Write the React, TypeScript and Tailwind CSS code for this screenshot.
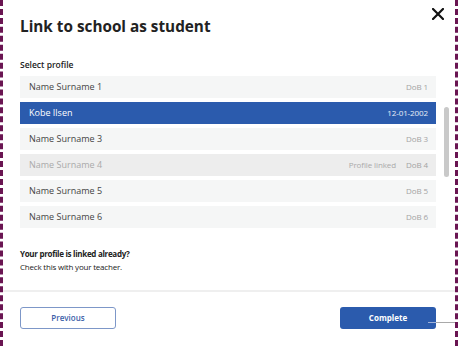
import React from 'react';

interface Profile {
  id: number;
  name: string;
  dob: string;
  selected?: boolean;
  linked?: boolean;
}

const profiles: Profile[] = [
  { id: 1, name: 'Name Surname 1', dob: 'DoB 1' },
  { id: 2, name: 'Kobe Ilsen', dob: '12-01-2002', selected: true },
  { id: 3, name: 'Name Surname 3', dob: 'DoB 3' },
  { id: 4, name: 'Name Surname 4', dob: 'DoB 4', linked: true },
  { id: 5, name: 'Name Surname 5', dob: 'DoB 5' },
  { id: 6, name: 'Name Surname 6', dob: 'DoB 6' },
];

const App: React.FC = () => {
  return (
    <div
      className="relative h-[346px] w-[458px] overflow-hidden bg-white border-x-[3px] border-dashed border-[#6a1552]"
      style={{ fontFamily: '"Open Sans", "Noto Sans", sans-serif' }}
    >
      {/* close */}
      <button className="absolute top-[8px] right-[11px] text-[#111]">
        <svg width="12" height="12" viewBox="0 0 12 12" fill="none">
          <path d="M1 1L11 11M11 1L1 11" stroke="currentColor" strokeWidth="2.2" strokeLinecap="square" />
        </svg>
      </button>

      {/* HEADER */}
      <div className="pl-[17px] pt-[14px]">
        <h1 className="text-[15.3px] leading-[24px] font-bold text-[#222]">
          Link to school as student
        </h1>
        <div className="mt-[20px] text-[8.5px] leading-[14px] font-semibold text-[#222]">
          Select profile
        </div>
      </div>

      {/* LIST + scrollbar */}
      <div className="mt-[4px] flex pl-[17px] pr-[6px]">
        <div className="flex flex-1 flex-col gap-[4px]">
          {profiles.map((p) => (
            <div
              key={p.id}
              className={`flex h-[22px] items-center justify-between pl-[9px] pr-[8px] text-[9px] ${
                p.selected
                  ? 'bg-[#2b5bad] text-white'
                  : p.linked
                  ? 'bg-[#ededed] text-[#aaa]'
                  : 'bg-[#f5f6f6] text-[#444]'
              }`}
            >
              <span>{p.name}</span>
              <div className="flex items-center gap-[10px] text-[8px] tracking-[-0.1px]">
                {p.linked ? <span className="text-[#aaa]">Profile linked</span> : null}
                <span className={p.selected ? 'text-white/90' : 'text-[#a3a3a3]'}>{p.dob}</span>
              </div>
            </div>
          ))}
        </div>
        <div className="ml-[8px] w-[5px]">
          <div className="mt-[31px] h-[70px] w-[5px] rounded-full bg-[#c9c9c9]" />
        </div>
      </div>

      {/* INFO */}
      <div className="mt-[19px] pl-[17px] text-[8px] leading-[13px] text-[#222]">
        <div className="font-bold tracking-[-0.3px]">Your profile is linked already?</div>
        <div className="tracking-[-0.2px]">Check this with your teacher.</div>
      </div>

      <div className="mt-[17px] h-[2px] w-full bg-[#efefef]" />

      {/* FOOTER */}
      <div className="mt-[15px] flex items-center justify-between pl-[17px] pr-[19px]">
        <button className="h-[22px] w-[96px] rounded-[3px] border border-[#7d97c8] text-[8px] font-semibold text-[#3b5ea8]">
          Previous
        </button>
        <button className="h-[22px] w-[96px] rounded-[3px] bg-[#2b5bad] text-[8px] font-bold text-white">
          Complete
        </button>
      </div>

      {/* connector line */}
      <div className="absolute top-[322px] left-[425px] h-[1px] w-[8px] bg-[#9fb2da]" />
      <div className="absolute top-[322px] left-[433px] h-[1px] w-[22px] bg-[#a9a9a9]" />
    </div>
  );
};

export default App;
